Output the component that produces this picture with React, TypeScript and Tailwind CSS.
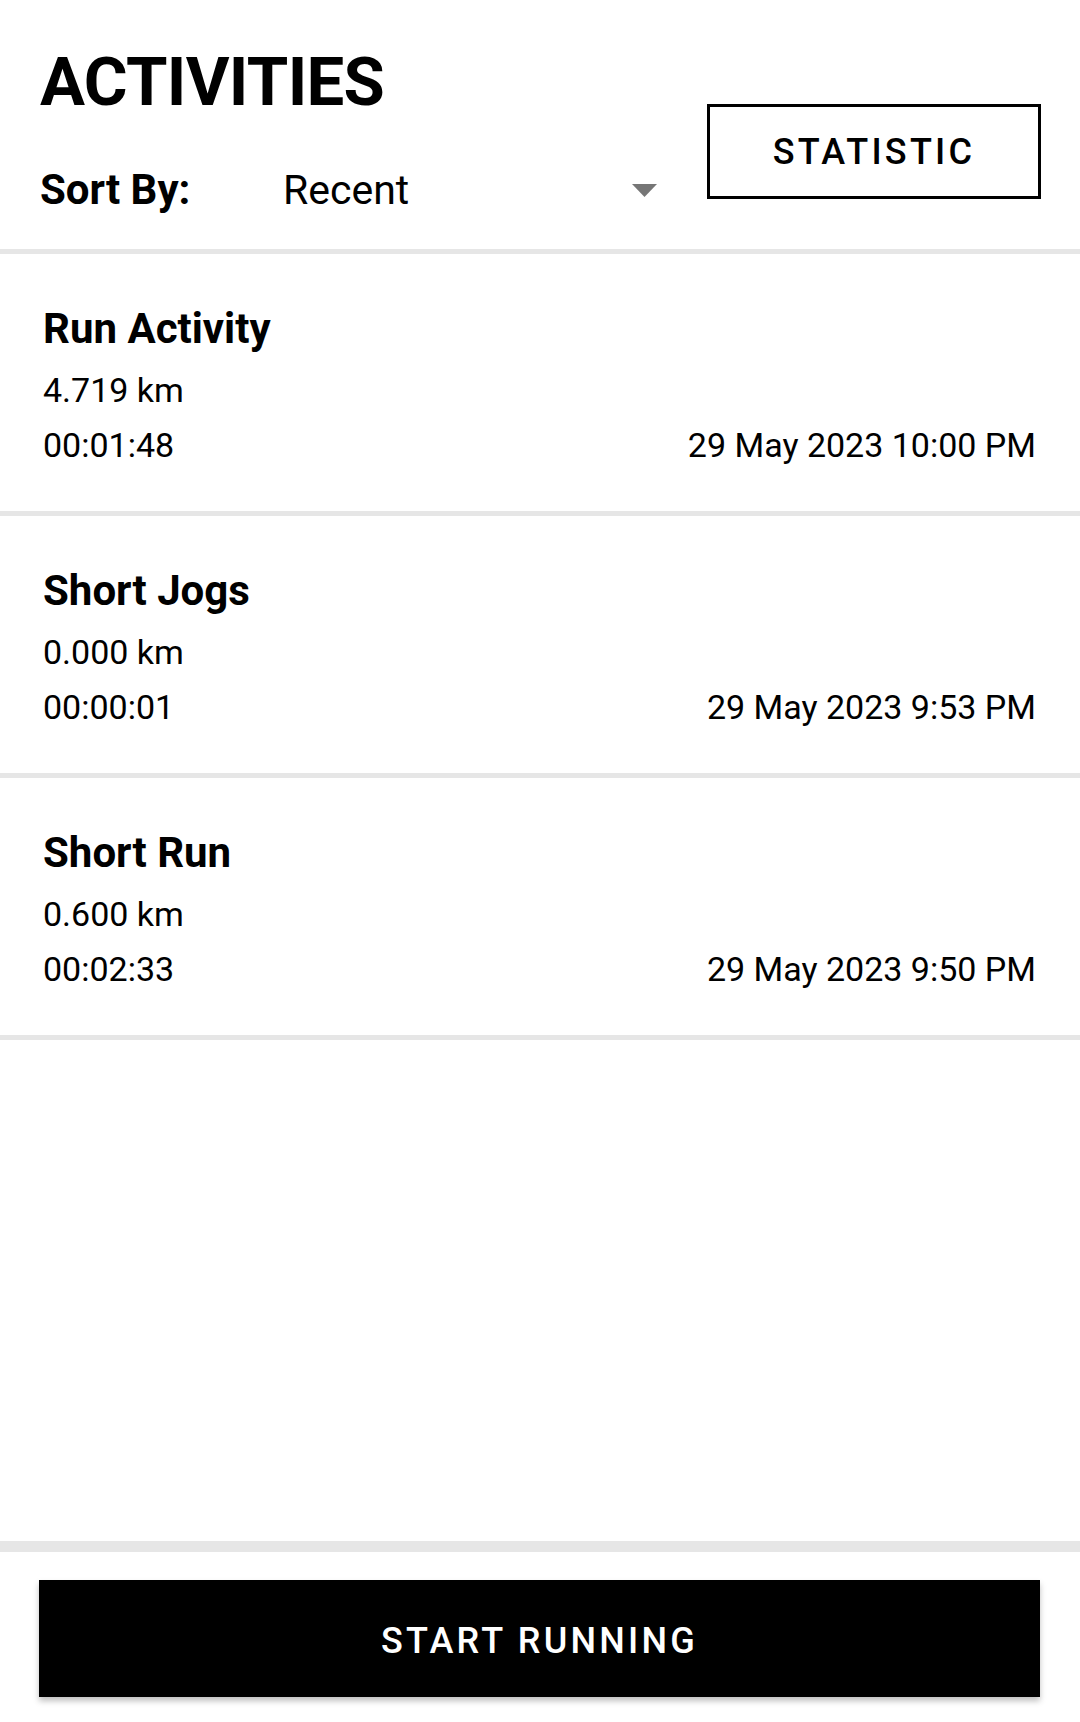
import React from 'react';

type Activity = {
  id: number;
  name: string;
  distance: string;
  duration: string;
  date: string;
};

const activities: Activity[] = [
  { id: 1, name: 'Run Activity', distance: '4.719 km', duration: '00:01:48', date: '29 May 2023 10:00 PM' },
  { id: 2, name: 'Short Jogs', distance: '0.000 km', duration: '00:00:01', date: '29 May 2023 9:53 PM' },
  { id: 3, name: 'Short Run', distance: '0.600 km', duration: '00:02:33', date: '29 May 2023 9:50 PM' },
];

const ActivityItem: React.FC<{ activity: Activity }> = ({ activity }) => (
  <div className="h-[257px] pl-[43px] pr-[44px] pt-[51px]" data-testid="activity-item">
    <p className="text-[42px] leading-[48px] font-bold text-black">{activity.name}</p>
    <p className="mt-[10px] text-[34px] leading-[55px] text-black">{activity.distance}</p>
    <div className="flex items-center justify-between text-[34px] leading-[55px] text-black">
      <span>{activity.duration}</span>
      <span>{activity.date}</span>
    </div>
  </div>
);

const App: React.FC = () => {
  return (
    <div className="flex h-[1722px] w-[1080px] flex-col bg-white font-['Roboto',sans-serif]">
      <div className="flex h-[249px] shrink-0 justify-between pl-[40px] pr-[39px] pt-[42px]">
        <div className="flex flex-col">
          <h1 className="text-[67px] leading-[81px] font-bold tracking-[-0.01em] text-black">ACTIVITIES</h1>
          <div className="mt-[44px] flex h-[46px] items-center leading-[46px]">
            <span className="w-[243px] text-[42px] font-bold text-black">Sort By:</span>
            <div className="flex w-[374px] items-center justify-between">
              <span className="text-[41px] text-black">Recent</span>
              <svg width="25" height="13" viewBox="0 0 25 13">
                <path d="M0 0 L25 0 L12.5 13 Z" fill="#767676" />
              </svg>
            </div>
          </div>
        </div>
        <button className="mt-[62px] flex h-[95px] w-[334px] items-center justify-center border-[3px] border-black bg-white text-[36px] font-medium tracking-[0.09em] text-black">
          STATISTIC
        </button>
      </div>

      <div className="h-[5px] shrink-0 bg-[#e6e6e6]" />
      {activities.map((activity) => (
        <React.Fragment key={activity.id}>
          <ActivityItem activity={activity} />
          <div className="h-[5px] shrink-0 bg-[#e6e6e6]" />
        </React.Fragment>
      ))}

      <div className="flex-1" />

      <div className="h-[11px] shrink-0 bg-[#e6e6e6]" />
      <div className="shrink-0 pb-[25px] pl-[39px] pr-[40px] pt-[28px]">
        <button className="flex h-[117px] w-full items-center justify-center bg-black pt-[4px] text-[36px] font-medium tracking-[0.09em] text-white shadow-[0_4px_6px_rgba(0,0,0,0.25)]">
          START RUNNING
        </button>
      </div>
    </div>
  );
};

export default App;
